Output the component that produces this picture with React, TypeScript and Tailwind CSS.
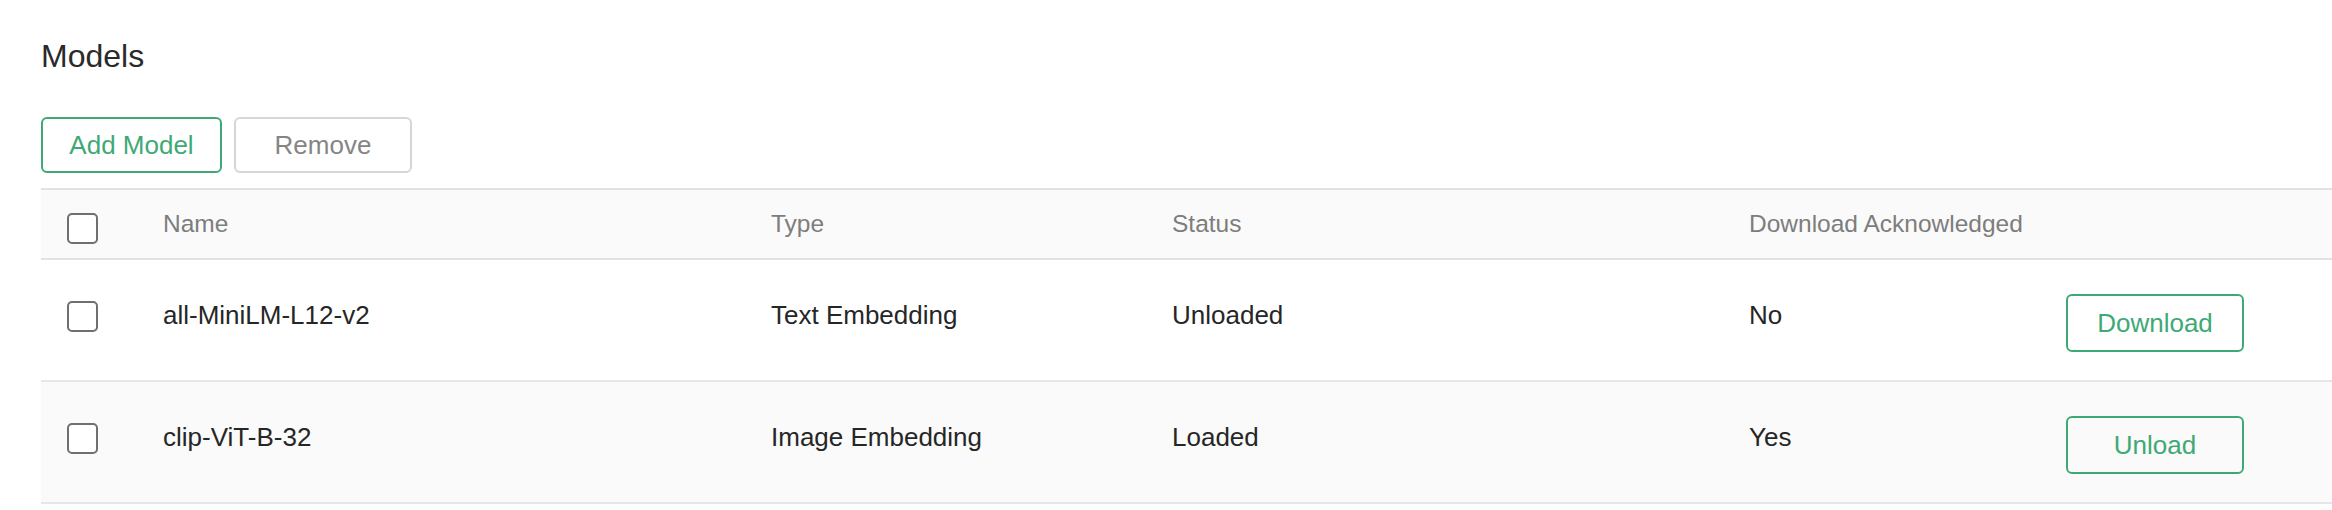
import { useState } from 'react';

type Model = {
  name: string;
  type: string;
  status: string;
  acknowledged: string;
  action: string;
};

const models: Model[] = [
  { name: 'all-MiniLM-L12-v2', type: 'Text Embedding', status: 'Unloaded', acknowledged: 'No', action: 'Download' },
  { name: 'clip-ViT-B-32', type: 'Image Embedding', status: 'Loaded', acknowledged: 'Yes', action: 'Unload' },
];

const cols = 'grid grid-cols-[122px_608px_401px_577px_317px_178px_1fr] items-center';

function Checkbox({ checked, onChange, className }: { checked: boolean; onChange: () => void; className?: string }) {
  return (
    <button
      onClick={onChange}
      className={`flex h-[31px] w-[31px] items-center justify-center rounded-[5px] border-2 border-[#6f6f6f] bg-white ${className ?? ''}`}
    >
      {checked && (
        <svg viewBox="0 0 16 16" className="h-5 w-5 text-[#3fa976]">
          <path d="M3 8.5l3.2 3L13 4.5" fill="none" stroke="currentColor" strokeWidth="2" />
        </svg>
      )}
    </button>
  );
}

export default function App() {
  const [selected, setSelected] = useState<string[]>([]);
  const allChecked = selected.length === models.length;

  const toggle = (name: string) =>
    setSelected((s) => (s.includes(name) ? s.filter((n) => n !== name) : [...s, name]));

  return (
    <div className="min-h-screen bg-white pl-[41px] pt-[40px] font-[family-name:'Liberation_Sans',Arial,sans-serif]">
      <h1 className="text-[32px] leading-[32px] text-[#2a2a2a]">Models</h1>

      <div className="mt-[45px] flex gap-3">
        <button className="h-[56px] w-[181px] rounded-[6px] border-2 border-[#3fa976] text-[26px] text-[#3fa976]">
          Add Model
        </button>
        <button className="h-[56px] w-[178px] rounded-[6px] border-2 border-[#d6d6d6] text-[26px] text-[#858585]">
          Remove
        </button>
      </div>

      <div className="mt-[15px]">
        <div className={`${cols} h-[72px] border-y-2 border-[#e2e2e2] bg-[#fafafa] text-[24.5px] text-[#7d7d7d]`}>
          <div className="pl-[26px]">
            <Checkbox
              checked={allChecked}
              onChange={() => setSelected(allChecked ? [] : models.map((m) => m.name))}
              className="mt-[8px]"
            />
          </div>
          <span>Name</span>
          <span>Type</span>
          <span>Status</span>
          <span className="whitespace-nowrap">Download Acknowledged</span>
          <span />
          <span />
        </div>

        {models.map((m, i) => (
          <div
            key={m.name}
            className={`${cols} h-[122px] border-b-2 border-[#e4e6e8] text-[26px] text-[#262626] ${i % 2 === 1 ? 'bg-[#fafafa]' : 'bg-white'}`}
          >
            <div className="pl-[26px]">
              <Checkbox checked={selected.includes(m.name)} onChange={() => toggle(m.name)} className="mb-[8px]" />
            </div>
            <span className="mb-[11px] leading-[26px]">{m.name}</span>
            <span className="mb-[11px] leading-[26px]">{m.type}</span>
            <span className="mb-[11px] leading-[26px]">{m.status}</span>
            <span className="mb-[11px] leading-[26px]">{m.acknowledged}</span>
            <button className="mt-[6px] h-[58px] w-[178px] rounded-[6px] border-2 border-[#3fa976] text-[26px] text-[#3fa976]">
              {m.action}
            </button>
            <span />
          </div>
        ))}
      </div>
    </div>
  );
}
